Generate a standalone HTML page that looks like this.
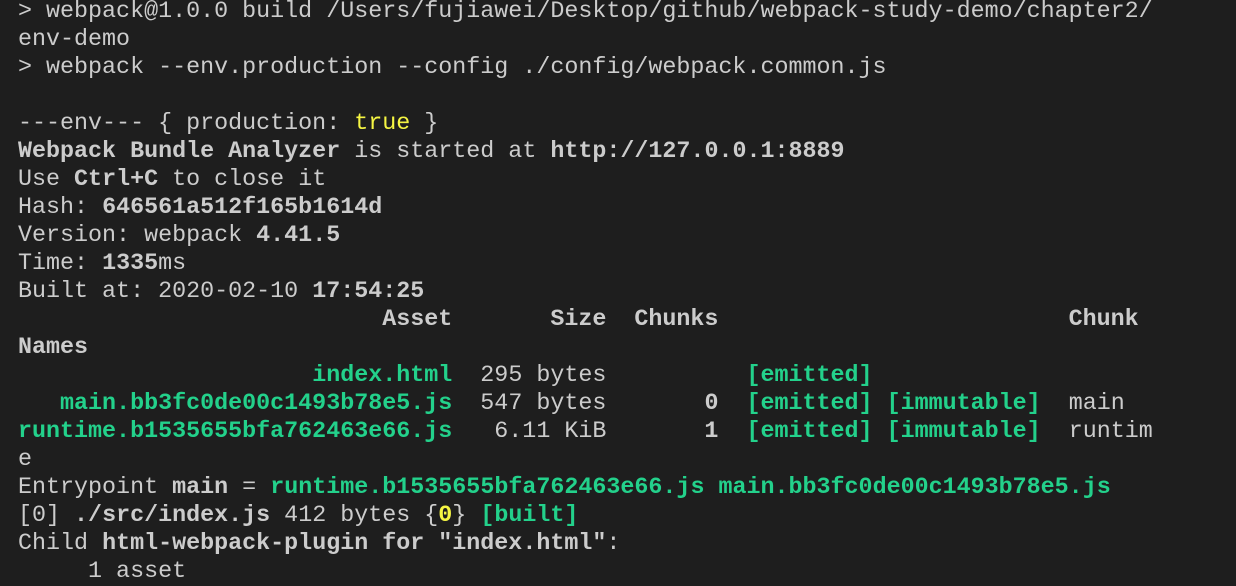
<!DOCTYPE html>
<html><head><meta charset="utf-8"><style>
html,body{margin:0;padding:0;background:#1e1e1e;width:1236px;height:566px;overflow:hidden}
pre{position:absolute;left:18px;top:-2px;margin:0;font-family:"Liberation Mono","DejaVu Sans Mono",monospace;font-size:23.35px;line-height:28px;color:#cccccc;white-space:pre}
b{font-weight:bold}
.g{color:#23d18b;font-weight:bold}
.y{color:#f5f543}
</style></head><body><pre>&gt; webpack@1.0.0 build /Users/fujiawei/Desktop/github/webpack-study-demo/chapter2/
env-demo
&gt; webpack --env.production --config ./config/webpack.common.js

---env--- { production: <span class="y">true</span> }
<b>Webpack Bundle Analyzer</b> is started at <b>http://127.0.0.1:8889</b>
Use <b>Ctrl+C</b> to close it
Hash: <b>646561a512f165b1614d</b>
Version: webpack <b>4.41.5</b>
Time: <b>1335</b>ms
Built at: 2020-02-10 <b>17:54:25</b>
<b>                          Asset       Size  Chunks                         Chunk</b>
<b>Names</b>
                     <span class="g">index.html</span>  295 bytes          <span class="g">[emitted]</span>
   <span class="g">main.bb3fc0de00c1493b78e5.js</span>  547 bytes       <b>0</b>  <span class="g">[emitted]</span> <span class="g">[immutable]</span>  main
<span class="g">runtime.b1535655bfa762463e66.js</span>   6.11 KiB       <b>1</b>  <span class="g">[emitted]</span> <span class="g">[immutable]</span>  runtim
e
Entrypoint <b>main</b> = <span class="g">runtime.b1535655bfa762463e66.js</span> <span class="g">main.bb3fc0de00c1493b78e5.js</span>
[0] <b>./src/index.js</b> 412 bytes {<b class="y">0</b>} <span class="g">[built]</span>
Child <b>html-webpack-plugin for "index.html"</b>:
     1 asset
</pre></body></html>
